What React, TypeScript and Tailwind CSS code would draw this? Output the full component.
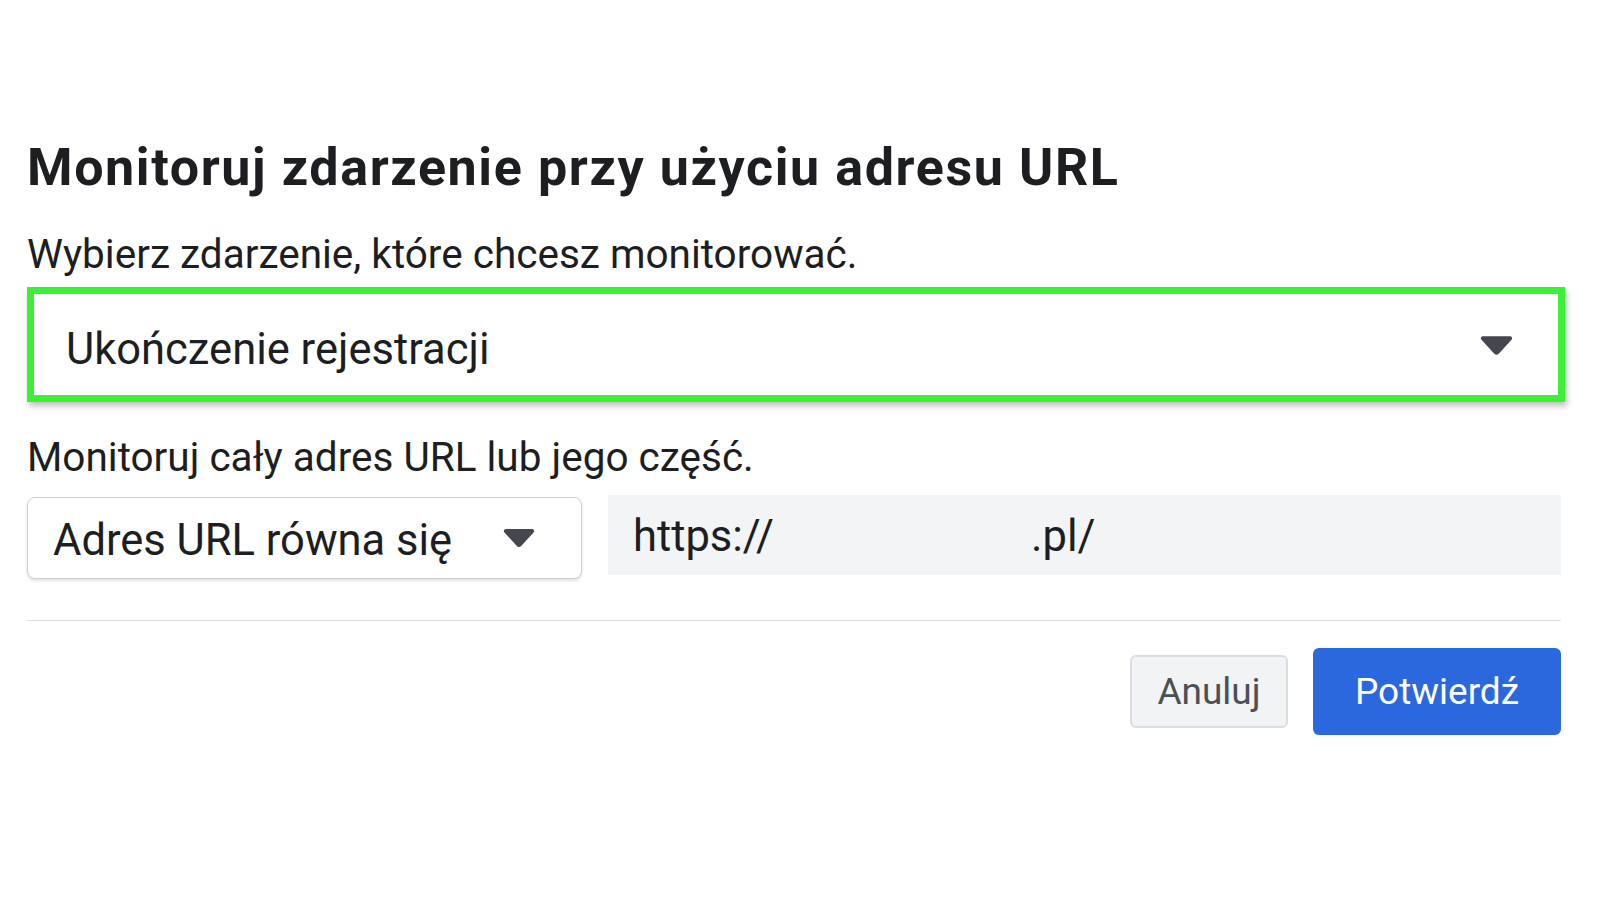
function Caret({ className }: { className?: string }) {
  return (
    <svg className={className} viewBox="0 0 34 21" fill="#44474d">
      <path d="M3.5 1h27c2.4 0 3.4 1.9 2 3.6L19.3 19c-1.2 1.4-3.4 1.4-4.6 0L1.5 4.6C0.1 2.9 1.1 1 3.5 1z" />
    </svg>
  );
}

export default function App() {
  return (
    <div className="w-[1600px] h-[900px] bg-white text-[#1c1e21] font-['Roboto',_'Liberation_Sans',_sans-serif] overflow-hidden">
      <div className="pt-[142px] pl-[27px] pr-[39px]">
        <h1 className="text-[52px] leading-none font-bold tracking-[1.6px]">
          Monitoruj zdarzenie przy użyciu adresu URL
        </h1>

        <p className="mt-[40px] text-[40.5px] leading-none">
          Wybierz zdarzenie, które chcesz monitorować.
        </p>

        <div className="mt-[12px] -mr-[4px] h-[115px] border-[7px] border-[#3eef37] bg-white shadow-[2px_4px_6px_rgba(0,0,0,0.25)] flex items-center justify-between pl-[32px] pr-[45px] pt-[12px]">
          <span className="text-[43.5px] leading-none">Ukończenie rejestracji</span>
          <Caret className="w-[33px] h-[21px] -mt-[10px]" />
        </div>

        <p className="mt-[35px] text-[40.5px] leading-none">
          Monitoruj cały adres URL lub jego część.
        </p>

        <div className="mt-[18px] flex items-start gap-[26px]">
          <div className="mt-[2px] w-[555px] h-[82px] shrink-0 rounded-[8px] border border-[#ccd0d5] bg-white shadow-[0_2px_3px_rgba(0,0,0,0.12)] flex items-center justify-between pl-[25px] pr-[46px]">
            <span className="text-[43.5px] leading-none pt-[6px]">Adres URL równa się</span>
            <Caret className="w-[32px] h-[20px]" />
          </div>
          <div className="flex-1 h-[80px] bg-[#f2f4f6] flex items-center pl-[25px] pt-[4px] text-[43.5px] leading-none">
            <span>https://</span>
            <span className="ml-[257px]">.pl/</span>
          </div>
        </div>

        <div className="mt-[41px] h-px bg-[#dadde1]" />

        <div className="mt-[27px] flex items-center justify-end gap-[25px]">
          <button className="w-[158px] h-[73px] rounded-[6px] border-2 border-[#dadde1] bg-[#f2f3f5] text-[37px] leading-none text-[#4b4f56]">
            Anuluj
          </button>
          <button className="w-[248px] h-[87px] rounded-[6px] bg-[#2b67dd] text-[37px] leading-none text-white">
            Potwierdź
          </button>
        </div>
      </div>
    </div>
  );
}
